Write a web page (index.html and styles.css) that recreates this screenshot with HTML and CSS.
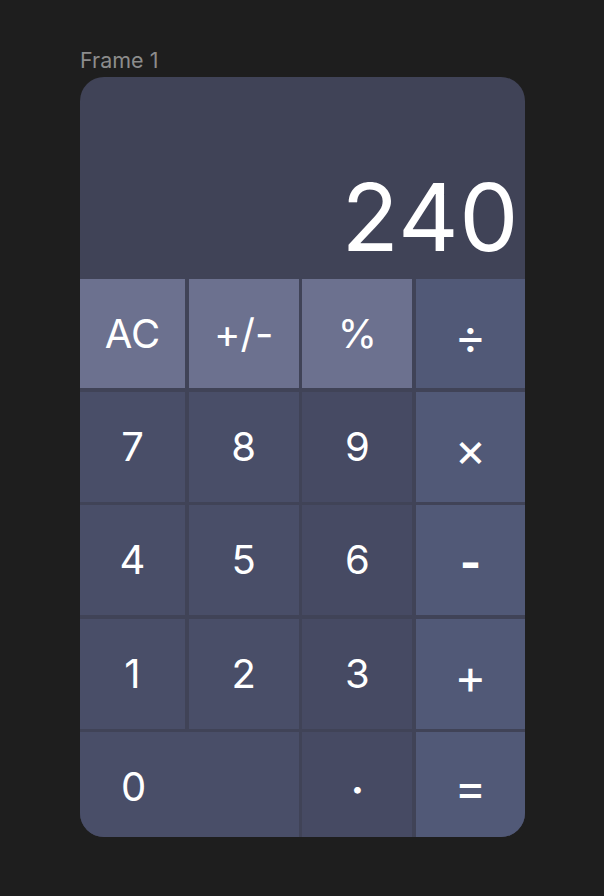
FILE: index.html
```html
<!DOCTYPE html>
<html>
<head>
<meta charset="utf-8">
<link rel="stylesheet" href="styles.css">
</head>
<body>
<div class="canvas">
  <div class="label">Frame 1</div>
  <div class="frame">
    <div class="display"><span class="value">240</span></div>
    <div class="keys">
      <div class="key fn">AC</div>
      <div class="key fn">+/-</div>
      <div class="key fn">%</div>
      <div class="key op">÷</div>
      <div class="key num">7</div>
      <div class="key num">8</div>
      <div class="key num c3">9</div>
      <div class="key op">×</div>
      <div class="key num">4</div>
      <div class="key num">5</div>
      <div class="key num c3">6</div>
      <div class="key op minus">-</div>
      <div class="key num">1</div>
      <div class="key num">2</div>
      <div class="key num c3">3</div>
      <div class="key op">+</div>
      <div class="key num zero">0</div>
      <div class="key num c3 dot">·</div>
      <div class="key op">=</div>
    </div>
  </div>
</div>
</body>
</html>
```

FILE: styles.css
```css
* { box-sizing: border-box; }
html, body {
  margin: 0;
  padding: 0;
  background: #1e1e1e;
}
body {
  font-family: Inter, "Noto Sans", sans-serif;
}
.canvas {
  padding: 47px 0 0 80px;
}
.label {
  color: #8c8c8c;
  font-size: 21.5px;
  line-height: 26px;
  height: 30px;
}
.frame {
  width: 445px;
  height: 760px;
  background: #404357;
  border-radius: 24px;
  overflow: hidden;
  display: flex;
  flex-direction: column;
}
.display {
  height: 202px;
  display: flex;
  justify-content: flex-end;
  align-items: flex-end;
  padding: 0 6px 15px 0;
}
.value {
  color: #ffffff;
  font-size: 94px;
  line-height: 1;
  letter-spacing: 0.5px;
}
.keys {
  flex: 1;
  display: grid;
  grid-template-columns: 105px 110px 110px 109px;
  grid-template-rows: 109px 110px 110px 110px 105px;
  column-gap: 3.67px;
  row-gap: 3.5px;
}
.key {
  display: flex;
  align-items: center;
  justify-content: center;
  color: #ffffff;
  font-size: 40px;
  line-height: 1;
}
.fn { background: #6c718f; }
.num { background: #494e68; }
.c3 { background: #464a63; }
.op {
  background: #515977;
  font-size: 48px;
  font-weight: 400;
  padding-top: 7px;
}
.minus {
  font-weight: 700;
  font-size: 46px;
  padding-top: 4px;
}
.zero {
  grid-column: span 2;
  justify-content: flex-start;
  padding-left: 41px;
  padding-top: 4px;
}
.dot {
  font-weight: 700;
  padding-top: 10px;
}
```
